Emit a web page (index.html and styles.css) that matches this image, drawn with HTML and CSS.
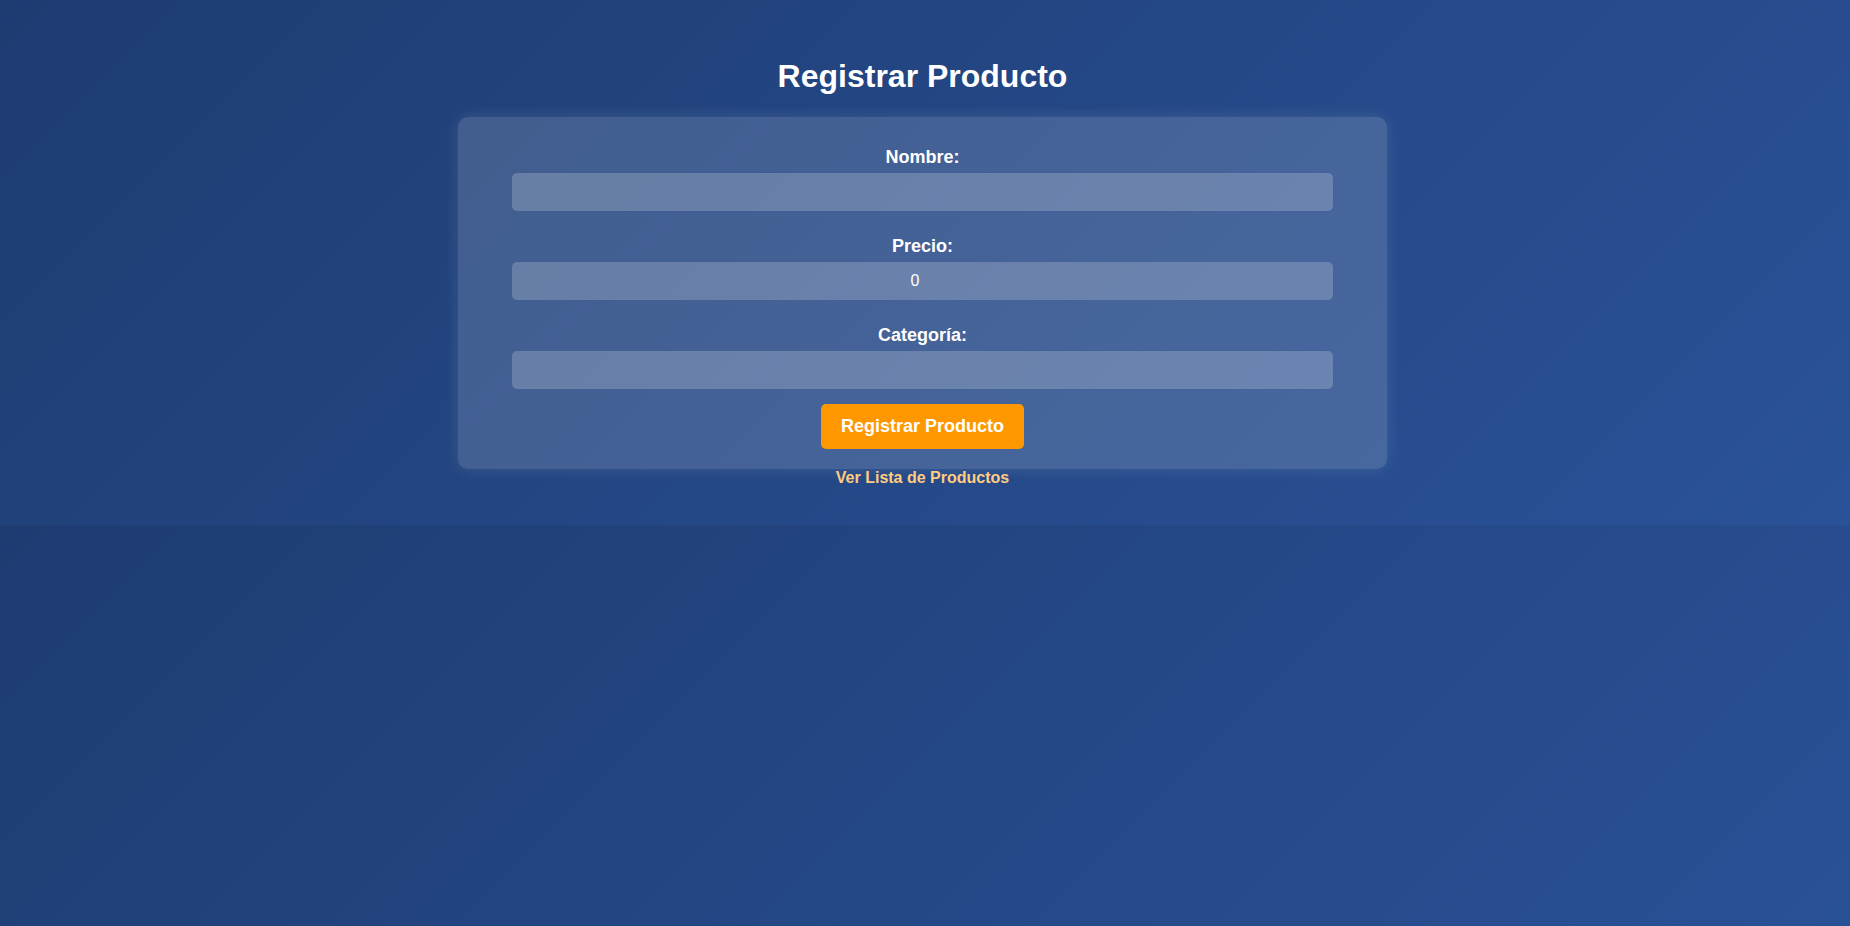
FILE: index.html
```html
<!DOCTYPE html>
<html lang="es">
<head>
<meta charset="utf-8">
<title>Registrar Producto</title>
<link rel="stylesheet" href="styles.css">
</head>
<body>
<div class="page">
  <h1 class="title">Registrar Producto</h1>
  <div class="card">
    <form class="form">
      <label class="label" for="nombre">Nombre:</label>
      <input class="field" id="nombre" type="text">
      <label class="label" for="precio">Precio:</label>
      <input class="field" id="precio" type="number" value="0">
      <label class="label" for="categoria">Categoría:</label>
      <input class="field" id="categoria" type="text">
      <button class="submit" type="button">Registrar Producto</button>
    </form>
  </div>
  <div class="links"><a class="link" href="#">Ver Lista de Productos</a></div>
</div>
</body>
</html>
```

FILE: styles.css
```css
html {
  margin: 0;
}
body {
  margin: 0;
  font-family: "Liberation Sans", Arial, sans-serif;
  color: #ffffff;
  background: linear-gradient(135deg, #1e3c72, #2a5298);
}
.page {
  padding: 58px 5px 38px 0;
  text-align: center;
}
.title {
  margin: 0 0 22px;
  font-size: 32px;
  font-weight: bold;
  line-height: normal;
}
.card {
  width: 889px;
  margin: 0 auto;
  padding: 20px;
  border-radius: 10px;
  background: rgba(255, 255, 255, 0.15);
  box-shadow: 0 0 15px rgba(255, 255, 255, 0.12);
}
.form {
  margin: 0;
  display: flex;
  flex-direction: column;
  align-items: center;
}
.label {
  display: block;
  margin: 10px 0 5px;
  font-size: 18px;
  font-weight: bold;
  line-height: normal;
}
.field {
  display: block;
  box-sizing: content-box;
  width: 90%;
  margin: 0 0 15px;
  padding: 10px;
  border: none;
  border-radius: 5px;
  background: rgba(255, 255, 255, 0.2);
  color: #ffffff;
  font-family: "Liberation Sans", Arial, sans-serif;
  font-size: 16px;
  text-align: center;
  outline: none;
}
.submit {
  display: block;
  margin: 0;
  padding: 12px 20px;
  border: none;
  border-radius: 5px;
  background: #ff9800;
  color: #ffffff;
  font-family: "Liberation Sans", Arial, sans-serif;
  font-size: 18px;
  font-weight: bold;
  line-height: normal;
  cursor: pointer;
}
.links {
  font-size: 16px;
}
.link {
  color: #ffcc80;
  font-weight: bold;
  text-decoration: none;
}
```
